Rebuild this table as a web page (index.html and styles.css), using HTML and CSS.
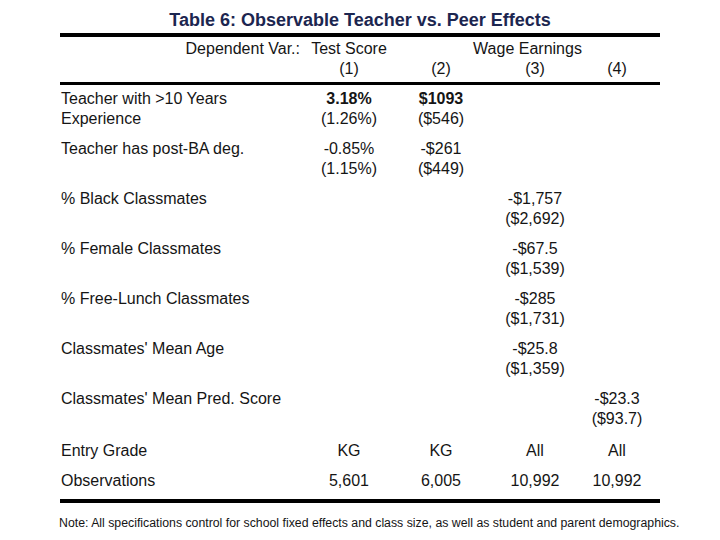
FILE: index.html
```html
<!DOCTYPE html>
<html>
<head>
<meta charset="utf-8">
<link rel="stylesheet" href="styles.css">
</head>
<body>
<div class="page">
  <h1 class="title">Table 6: Observable Teacher vs. Peer Effects</h1>
  <div class="table">
    <div class="rule thick"></div>
    <div class="row head">
      <div class="label right">Dependent Var.:</div>
      <div class="c">Test Score</div>
      <div class="c span">Wage Earnings</div>
    </div>
    <div class="row head2">
      <div class="label"></div>
      <div class="c">(1)</div>
      <div class="c">(2)</div>
      <div class="c">(3)</div>
      <div class="c c4">(4)</div>
    </div>
    <div class="rule mid"></div>
    <div class="body">
      <div class="row">
        <div class="label">Teacher with &gt;10 Years<br>Experience</div>
        <div class="c"><b>3.18%</b><br>(1.26%)</div>
        <div class="c"><b>$1093</b><br>($546)</div>
        <div class="c"></div>
        <div class="c c4"></div>
      </div>
      <div class="row">
        <div class="label">Teacher has post-BA deg.</div>
        <div class="c">-0.85%<br>(1.15%)</div>
        <div class="c">-$261<br>($449)</div>
        <div class="c"></div>
        <div class="c c4"></div>
      </div>
      <div class="row">
        <div class="label">% Black Classmates</div>
        <div class="c"></div>
        <div class="c"></div>
        <div class="c">-$1,757<br>($2,692)</div>
        <div class="c c4"></div>
      </div>
      <div class="row">
        <div class="label">% Female Classmates</div>
        <div class="c"></div>
        <div class="c"></div>
        <div class="c">-$67.5<br>($1,539)</div>
        <div class="c c4"></div>
      </div>
      <div class="row">
        <div class="label">% Free-Lunch Classmates</div>
        <div class="c"></div>
        <div class="c"></div>
        <div class="c">-$285<br>($1,731)</div>
        <div class="c c4"></div>
      </div>
      <div class="row">
        <div class="label">Classmates' Mean Age</div>
        <div class="c"></div>
        <div class="c"></div>
        <div class="c">-$25.8<br>($1,359)</div>
        <div class="c c4"></div>
      </div>
      <div class="row">
        <div class="label">Classmates' Mean Pred. Score</div>
        <div class="c"></div>
        <div class="c"></div>
        <div class="c"></div>
        <div class="c c4">-$23.3<br>($93.7)</div>
      </div>
      <div class="row single first">
        <div class="label">Entry Grade</div>
        <div class="c">KG</div>
        <div class="c">KG</div>
        <div class="c">All</div>
        <div class="c c4">All</div>
      </div>
      <div class="row single">
        <div class="label">Observations</div>
        <div class="c">5,601</div>
        <div class="c">6,005</div>
        <div class="c">10,992</div>
        <div class="c c4">10,992</div>
      </div>
    </div>
    <div class="rule thick bottom"></div>
  </div>
  <p class="note">Note: All specifications control for school fixed effects and class size, as well as student and parent demographics.</p>
</div>
</body>
</html>
```

FILE: styles.css
```css
html, body {
  margin: 0;
  padding: 0;
  background: #ffffff;
}

body {
  font-family: "Liberation Sans", Arial, sans-serif;
  color: #151515;
  width: 720px;
  height: 540px;
  overflow: hidden;
}

.page {
  display: flex;
  flex-direction: column;
  align-items: center;
}

.title {
  margin: 0 0 2px 0;
  padding-top: 9px;
  font-size: 18px;
  line-height: 22px;
  font-weight: bold;
  color: #1c2650;
  text-align: center;
}

.table {
  width: 600px;
  display: flex;
  flex-direction: column;
  font-size: 16px;
  line-height: 20px;
}

.rule {
  background: #000000;
  height: 4px;
}

.rule.mid {
  height: 3px;
  margin-top: 3px;
}

.rule.bottom {
  margin-top: 8px;
}

.row {
  display: grid;
  grid-template-columns: 243px 92px 92px 96px 77px;
}

.head {
  margin-top: 2px;
}

.label {
  padding-left: 1px;
  white-space: nowrap;
}

.label.right {
  text-align: right;
  padding-right: 3px;
}

.c {
  text-align: center;
  white-space: nowrap;
}

.c4 {
  padding-right: 9px;
}

.span {
  grid-column: 3 / 6;
}

.body {
  padding-top: 4px;
  display: flex;
  flex-direction: column;
  gap: 10px;
}

.row.first {
  margin-top: 2px;
}

.note {
  align-self: flex-start;
  margin: 13px 0 0 59px;
  font-size: 12.3px;
  line-height: 14px;
  color: #151515;
  white-space: nowrap;
}
```
